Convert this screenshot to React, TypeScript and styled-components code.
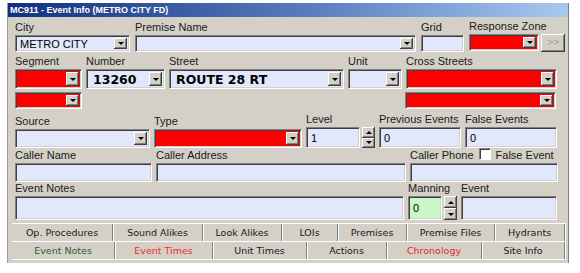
import styled, { createGlobalStyle } from "styled-components";
import type { ReactNode } from "react";

const colors = {
  face: "#d4d0c8",
  shadow: "#808080",
  dark: "#404040",
  light: "#ffffff",
  field: "#e2e8fb",
  red: "#ff0000",
  green: "#c8f8c8",
  text: "#1a1a1a",
};

const GlobalStyle = createGlobalStyle`
  html, body {
    margin: 0;
    padding: 0;
    background: #fff;
  }
  body {
    font-family: "Liberation Sans", Arial, sans-serif;
    font-size: 11px;
    color: ${colors.text};
  }
  * {
    box-sizing: border-box;
  }
`;

const Window = styled.div`
  margin: 3px 0 0 7px;
  width: 562px;
  height: 260px;
  background: ${colors.face};
  border-left: 1px solid #9a9a9a;
  border-right: 1px solid ${colors.shadow};
  display: flex;
  flex-direction: column;
`;

const TitleBar = styled.div`
  height: 14px;
  line-height: 14px;
  padding-left: 2px;
  background: linear-gradient(to right, #10307e, #5a7fc0 55%, #a8c8f0);
  color: #fff;
  font-weight: bold;
  font-size: 9px;
  white-space: nowrap;
`;

const Body = styled.div`
  flex: 1;
  display: flex;
  flex-direction: column;
  padding: 0 2px 0 4px;
`;

const Fields = styled.div`
  display: flex;
  flex-direction: column;
  padding-left: 3px;
`;

const Row = styled.div<{ $mt: number; $gap?: number }>`
  display: flex;
  align-items: flex-end;
  margin-top: ${(p) => p.$mt}px;
  gap: ${(p) => p.$gap ?? 4}px;
`;

const FieldWrap = styled.div<{ $w: number }>`
  display: flex;
  flex-direction: column;
  width: ${(p) => p.$w}px;
  flex: none;
`;

const Label = styled.div<{ $h: number }>`
  height: ${(p) => p.$h}px;
  display: flex;
  align-items: flex-end;
  padding-bottom: 2px;
  line-height: 12px;
  white-space: nowrap;
`;

const Spacer = styled.div<{ $w: number }>`
  width: ${(p) => p.$w}px;
  flex: none;
`;

const Inline = styled.div`
  display: flex;
  gap: 2px;
`;

const Sunken = styled.div<{ $h: number; $bg?: string }>`
  display: flex;
  flex: 1 1 auto;
  min-width: 0;
  height: ${(p) => p.$h}px;
  background: ${(p) => p.$bg ?? colors.field};
  border-top: 1px solid ${colors.shadow};
  border-left: 1px solid ${colors.shadow};
  border-bottom: 1px solid ${colors.light};
  border-right: 1px solid ${colors.light};
  box-shadow: inset 1px 1px ${colors.dark}, inset -1px -1px ${colors.face};
  padding: 2px;
`;

const Value = styled.div<{ $bold?: boolean }>`
  flex: 1;
  display: flex;
  align-items: center;
  padding-left: ${(p) => (p.$bold ? "4px" : "2px")};
  overflow: hidden;
  white-space: nowrap;
  color: #000;
  font-family: ${(p) =>
    p.$bold ? `"DejaVu Sans", Verdana, sans-serif` : `"Liberation Sans", Arial, sans-serif`};
  font-size: ${(p) => (p.$bold ? "12.5px" : "11px")};
  font-weight: ${(p) => (p.$bold ? "bold" : "normal")};
`;

const Raised = styled.div`
  width: 13px;
  flex: none;
  display: flex;
  align-items: center;
  justify-content: center;
  background: ${colors.face};
  box-shadow: inset -1px -1px ${colors.dark}, inset 1px 1px ${colors.light},
    inset -2px -2px ${colors.shadow};
`;

const SpinBox = styled.div<{ $h: number }>`
  width: 13px;
  height: ${(p) => p.$h}px;
  flex: none;
  display: flex;
  flex-direction: column;
`;

const SpinButton = styled(Raised)`
  flex: 1;
`;

const Arrow = styled.span<{ $up?: boolean }>`
  width: 0;
  height: 0;
  border-left: 3px solid transparent;
  border-right: 3px solid transparent;
  ${(p) =>
    p.$up ? `border-bottom: 3px solid #000;` : `border-top: 3px solid #000;`}
`;

const MoreButton = styled(Raised)`
  width: 24px;
  height: 18px;
  color: #9a9a9a;
  font-family: "DejaVu Sans", Verdana, sans-serif;
  font-size: 8px;
  line-height: 1;
  letter-spacing: -1px;
`;

const Check = styled.span`
  width: 12px;
  height: 12px;
  margin: 0 5px 1px 5px;
  background: #fff;
  border-top: 1px solid ${colors.shadow};
  border-left: 1px solid ${colors.shadow};
  border-bottom: 1px solid ${colors.light};
  border-right: 1px solid ${colors.light};
  box-shadow: inset 1px 1px ${colors.dark};
`;

const TabStrip = styled.div`
  display: flex;
  flex-direction: column;
  margin-top: 3px;
  flex: 1;
`;

const TabRow = styled.div`
  display: flex;
  height: 18px;
  border-top: 1px solid ${colors.light};
`;

const Tab = styled.div<{ $w: number; $color?: string }>`
  width: ${(p) => p.$w}px;
  flex: none;
  display: flex;
  align-items: center;
  justify-content: center;
  font-family: "DejaVu Sans", Verdana, sans-serif;
  font-size: 9.5px;
  color: ${(p) => p.$color ?? "#181818"};
  border-right: 1px solid ${colors.shadow};
  box-shadow: 1px 0 0 ${colors.light};
  white-space: nowrap;
`;

const TabFoot = styled.div`
  flex: 1;
  border-top: 1px solid ${colors.light};
`;

type FieldProps = {
  label?: ReactNode;
  w: number;
  lh?: number;
  children: ReactNode;
};

const Field = ({ label, w, lh = 14, children }: FieldProps) => (
  <FieldWrap $w={w}>
    {label !== undefined && <Label $h={lh}>{label}</Label>}
    {children}
  </FieldWrap>
);

type BoxProps = {
  h: number;
  bg?: string;
  value?: string;
  bold?: boolean;
};

const Combo = ({ h, bg, value, bold }: BoxProps) => (
  <Sunken $h={h} $bg={bg}>
    <Value $bold={bold}>{value}</Value>
    <Raised>
      <Arrow />
    </Raised>
  </Sunken>
);

const TextBox = ({ h, bg, value }: BoxProps) => (
  <Sunken $h={h} $bg={bg}>
    <Value>{value}</Value>
  </Sunken>
);

const Spin = ({ h }: { h: number }) => (
  <SpinBox $h={h}>
    <SpinButton>
      <Arrow $up />
    </SpinButton>
    <SpinButton>
      <Arrow />
    </SpinButton>
  </SpinBox>
);

const topTabs = [
  { name: "Op. Procedures", w: 101 },
  { name: "Sound Alikes", w: 90 },
  { name: "Look Alikes", w: 79 },
  { name: "LOIs", w: 56 },
  { name: "Premises", w: 69 },
  { name: "Premise Files", w: 88 },
  { name: "Hydrants", w: 70 },
];

const bottomTabs = [
  { name: "Event Notes", w: 103, color: "#2a602c" },
  { name: "Event Times", w: 98, color: "#f02a2e" },
  { name: "Unit Times", w: 94 },
  { name: "Actions", w: 80 },
  { name: "Chronology", w: 95, color: "#e8262a" },
  { name: "Site Info", w: 83 },
];

const App = () => {
  return (
    <>
      <GlobalStyle />
      <Window>
        <TitleBar>MC911 - Event Info (METRO CITY FD)</TitleBar>
        <Body>
          <Fields>
            <Row $mt={3} $gap={5}>
              <Field label="City" w={115}>
                <Combo h={17} value="METRO CITY" />
              </Field>
              <Field label="Premise Name" w={281}>
                <Combo h={17} />
              </Field>
              <Field label="Grid" w={43}>
                <TextBox h={17} />
              </Field>
              <Field label="Response Zone" w={96}>
                <Inline>
                  <Combo h={17} bg={colors.red} />
                  <MoreButton>&gt;&gt;</MoreButton>
                </Inline>
              </Field>
            </Row>

            <Row $mt={3}>
              <Field label="Segment" w={67}>
                <Combo h={20} bg={colors.red} />
              </Field>
              <Field label="Number" w={79}>
                <Combo h={20} value="13260" bold />
              </Field>
              <Field label="Street" w={175}>
                <Combo h={20} value="ROUTE 28 RT" bold />
              </Field>
              <Field label="Unit" w={54}>
                <Combo h={20} />
              </Field>
              <Field label="Cross Streets" w={151}>
                <Combo h={20} bg={colors.red} />
              </Field>
            </Row>

            <Row $mt={3}>
              <Field w={67}>
                <Combo h={17} bg={colors.red} />
              </Field>
              <Spacer $w={315} />
              <Field w={151}>
                <Combo h={17} bg={colors.red} />
              </Field>
            </Row>

            <Row $mt={3}>
              <Field label="Source" w={135} lh={15}>
                <Combo h={19} />
              </Field>
              <Field label="Type" w={148} lh={15}>
                <Combo h={19} bg={colors.red} />
              </Field>
              <Field label="Level" w={69} lh={15}>
                <Inline>
                  <TextBox h={21} value="1" />
                  <Spin h={21} />
                </Inline>
              </Field>
              <Field label="Previous Events" w={82} lh={15}>
                <TextBox h={21} value="0" />
              </Field>
              <Field label="False Events" w={92} lh={15}>
                <TextBox h={21} value="0" />
              </Field>
            </Row>

            <Row $mt={1}>
              <Field label="Caller Name" w={137}>
                <TextBox h={19} />
              </Field>
              <Field label="Caller Address" w={250}>
                <TextBox h={19} />
              </Field>
              <Field
                w={148}
                label={
                  <>
                    Caller Phone
                    <Check />
                    False Event
                  </>
                }
              >
                <TextBox h={19} />
              </Field>
            </Row>

            <Row $mt={1}>
              <Field label="Event Notes" w={389} lh={13}>
                <TextBox h={24} />
              </Field>
              <Field label="Manning" w={49} lh={13}>
                <Inline>
                  <TextBox h={24} bg={colors.green} value="0" />
                  <Spin h={24} />
                </Inline>
              </Field>
              <Field label="Event" w={96} lh={13}>
                <TextBox h={24} />
              </Field>
            </Row>
          </Fields>

          <TabStrip>
            <TabRow>
              {topTabs.map((t) => (
                <Tab key={t.name} $w={t.w}>
                  {t.name}
                </Tab>
              ))}
            </TabRow>
            <TabRow>
              {bottomTabs.map((t) => (
                <Tab key={t.name} $w={t.w} $color={t.color}>
                  {t.name}
                </Tab>
              ))}
            </TabRow>
            <TabFoot />
          </TabStrip>
        </Body>
      </Window>
    </>
  );
};

export default App;
